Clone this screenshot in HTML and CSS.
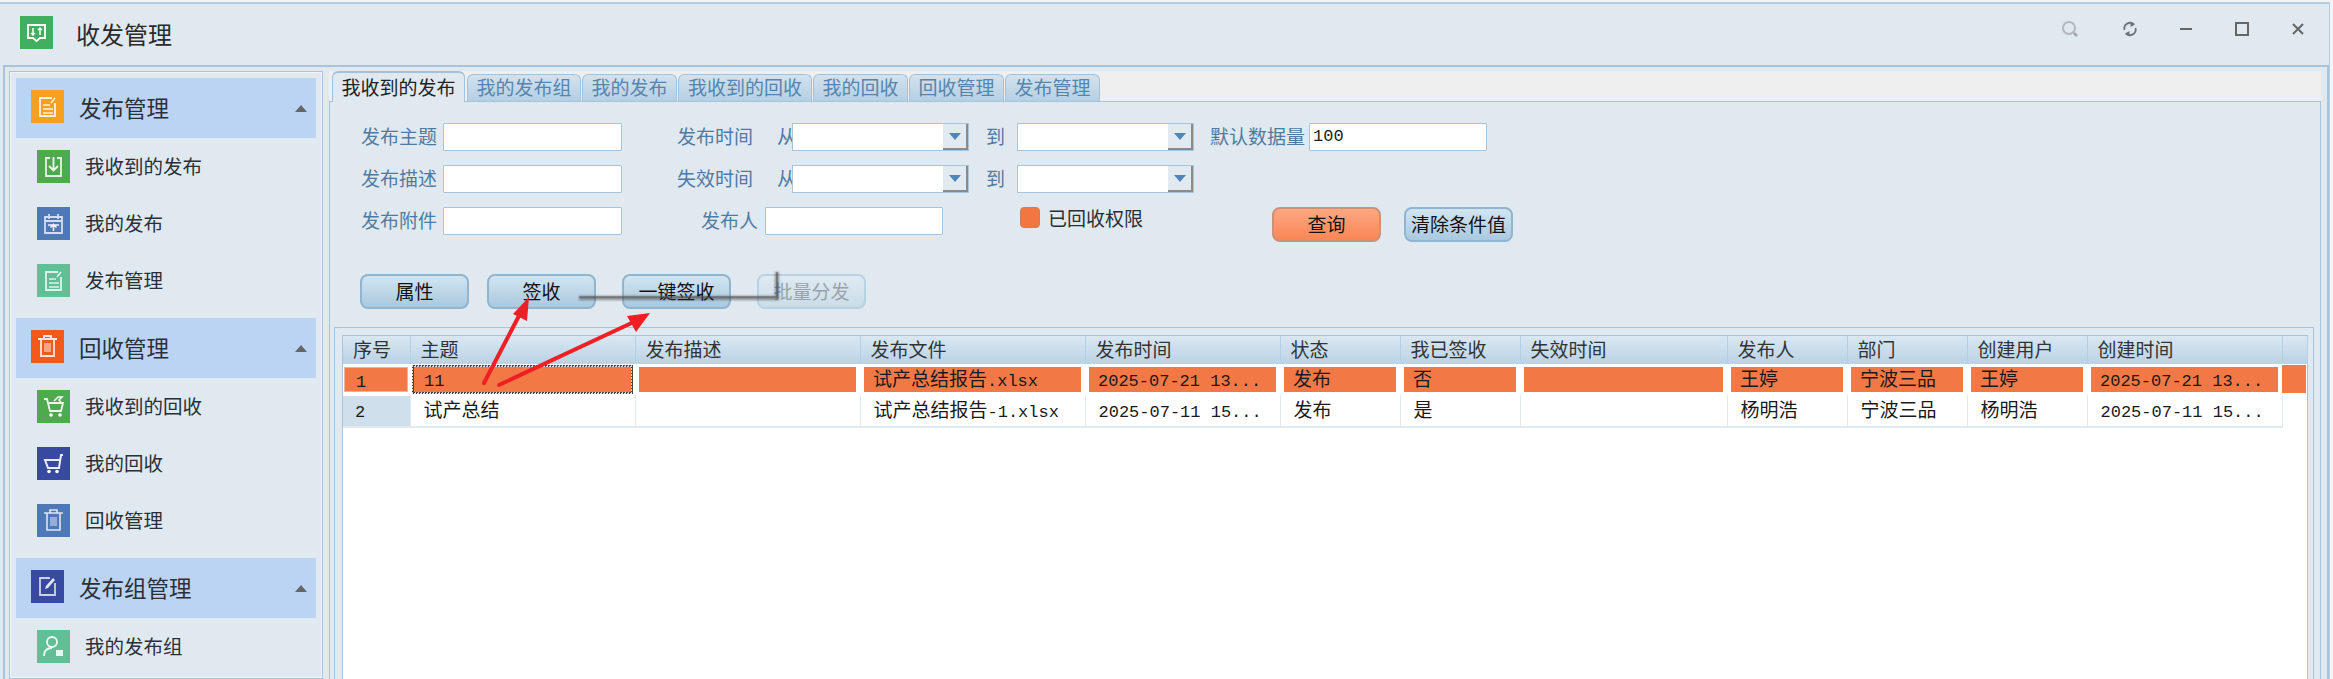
FILE: index.html
```html
<!DOCTYPE html>
<html lang="zh-CN">
<head>
<meta charset="utf-8">
<title>收发管理</title>
<link rel="stylesheet" href="styles.css">
</head>
<body>
<div class="window">
  <header class="titlebar">
    <span class="ico logo ico-green2"><svg viewBox="0 0 33 33"><path d="M8 9h17v13h-5l-3.500 3-3.500-3H8z" fill="none" stroke="#fff" stroke-width="1.800"/><path d="M13 12v7M11 17l2 2 2-2M20 19v-7M18 14l2-2 2 2" fill="none" stroke="#fff" stroke-width="1.500"/></svg></span>
    <span class="app-title">收发管理</span>
    <div class="controls">
      <span class="ctl ctl-search"><svg viewBox="0 0 20 20"><circle cx="9" cy="9" r="6" fill="none" stroke="#b4b8bc" stroke-width="2"/><path d="M14 14l3 3" stroke="#a0a4a8" stroke-width="2.500"/></svg></span>
      <span class="ctl"><svg viewBox="0 0 20 20"><path d="M4.500 11A5.700 5.700 0 0 1 14 5.500M15.500 9A5.700 5.700 0 0 1 6 14.500" fill="none" stroke="#707478" stroke-width="1.800"/><path d="M10.500 2.500l4.500 3-4.500 2.500zM9.500 17.500L5 14.500 9.500 12z" fill="#707478"/></svg></span>
      <span class="ctl"><svg viewBox="0 0 20 20"><path d="M4 10h12" stroke="#666" stroke-width="2"/></svg></span>
      <span class="ctl"><svg viewBox="0 0 20 20"><rect x="4" y="4" width="12" height="12" fill="none" stroke="#666" stroke-width="2"/></svg></span>
      <span class="ctl ctl-close"><svg viewBox="0 0 20 20"><path d="M5 5l10 10M15 5L5 15" stroke="#666" stroke-width="2"/></svg></span>
    </div>
  </header>
  <div class="main">
    <aside class="sidebar">
      <div class="side-panel">
        <section class="group">
          <div class="group-head">
            <span class="ico ico-orange"><svg viewBox="0 0 33 33"><path d="M21 8H9v18h15V13" fill="none" stroke="#fff" stroke-opacity=".85" stroke-width="1.800"/><path d="M12 15h7M12 19h10M12 23h10M20 13l4-5" fill="none" stroke="#fff" stroke-opacity=".85" stroke-width="1.600"/></svg></span>
            <span class="group-name">发布管理</span><i class="caret"></i>
          </div>
          <div class="item"><span class="ico ico-green"><svg viewBox="0 0 33 33"><path d="M13 8H9v18h15V8h-4" fill="none" stroke="#fff" stroke-opacity=".85" stroke-width="1.800"/><path d="M16.500 7v13M12 16l4.500 4.500L21 16" fill="none" stroke="#fff" stroke-opacity=".9" stroke-width="1.800"/></svg></span><span class="item-name">我收到的发布</span></div>
          <div class="item"><span class="ico ico-blue"><svg viewBox="0 0 33 33"><path d="M8 10h17v16H8zM8 14h17M12 7v5M21 7v5" fill="none" stroke="#fff" stroke-opacity=".75" stroke-width="1.800"/><path d="M11 18h11M16.500 24v-6M13.500 20.500l3-3 3 3" fill="none" stroke="#fff" stroke-opacity=".9" stroke-width="1.600"/></svg></span><span class="item-name">我的发布</span></div>
          <div class="item"><span class="ico ico-mint"><svg viewBox="0 0 33 33"><path d="M21 8H9v18h15V13" fill="none" stroke="#fff" stroke-opacity=".8" stroke-width="1.800"/><path d="M12 15h7M12 19h10M12 23h10M20 13l4-5" fill="none" stroke="#fff" stroke-opacity=".8" stroke-width="1.600"/></svg></span><span class="item-name">发布管理</span></div>
        </section>
        <section class="group">
          <div class="group-head">
            <span class="ico ico-red"><svg viewBox="0 0 33 33"><path d="M7 9h19M13 9V6h7v3M10 9v17h13V9" fill="none" stroke="#fff" stroke-opacity=".85" stroke-width="1.800"/><path d="M13 13h7v9h-7z" fill="#fff" fill-opacity=".45"/></svg></span>
            <span class="group-name">回收管理</span><i class="caret"></i>
          </div>
          <div class="item"><span class="ico ico-green"><svg viewBox="0 0 33 33"><path d="M7 9h3l3 12h11l2-8H12" fill="none" stroke="#fff" stroke-opacity=".9" stroke-width="1.800"/><circle cx="14" cy="25" r="1.800" fill="#fff"/><circle cx="23" cy="25" r="1.800" fill="#fff"/><path d="M17 11l4-4h4l-3 3 2 2" fill="none" stroke="#fff" stroke-width="1.500"/></svg></span><span class="item-name">我收到的回收</span></div>
          <div class="item"><span class="ico ico-navy"><svg viewBox="0 0 33 33"><path d="M26 8h-2l-2 13H11L8 13h15" fill="none" stroke="#fff" stroke-opacity=".9" stroke-width="2"/><circle cx="12" cy="24.500" r="1.800" fill="#fff"/><circle cx="20" cy="24.500" r="1.800" fill="#fff"/></svg></span><span class="item-name">我的回收</span></div>
          <div class="item"><span class="ico ico-blue"><svg viewBox="0 0 33 33"><path d="M7 9h19M13 9V6h7v3M10 9v17h13V9" fill="none" stroke="#fff" stroke-opacity=".8" stroke-width="1.600"/><path d="M13 13h7v9h-7z" fill="#fff" fill-opacity=".4"/></svg></span><span class="item-name">回收管理</span></div>
        </section>
        <section class="group">
          <div class="group-head">
            <span class="ico ico-navy"><svg viewBox="0 0 33 33"><path d="M19 8H9v17h15V13M9 25h15" fill="none" stroke="#fff" stroke-opacity=".75" stroke-width="1.800"/><path d="M14 19l1-3 7-8 2 2-7 8z" fill="#fff" fill-opacity=".85"/></svg></span>
            <span class="group-name">发布组管理</span><i class="caret"></i>
          </div>
          <div class="item"><span class="ico ico-mint"><svg viewBox="0 0 33 33"><circle cx="15" cy="12" r="5" fill="none" stroke="#fff" stroke-opacity=".9" stroke-width="1.800"/><path d="M7 26c0-5 3-8 8-8" fill="none" stroke="#fff" stroke-opacity=".9" stroke-width="1.800"/><rect x="19" y="20" width="7" height="6" fill="#fff" fill-opacity=".85"/></svg></span><span class="item-name">我的发布组</span></div>
        </section>
      </div>
    </aside>
    <main class="content">
      <nav class="tabs">
        <span class="tab tab-active">我收到的发布</span>
        <span class="tab tab-5">我的发布组</span>
        <span class="tab tab-4">我的发布</span>
        <span class="tab tab-6">我收到的回收</span>
        <span class="tab tab-4b">我的回收</span>
        <span class="tab tab-4b">回收管理</span>
        <span class="tab tab-4b">发布管理</span>
      </nav>
      <div class="page">
        <form class="filters">
          <div class="row">
            <label class="lbl lbl-a">发布主题</label><span class="field field-a"></span>
            <label class="lbl lbl-b">发布时间</label><label class="lbl lbl-from">从</label>
            <span class="combo"><i class="combo-btn"></i></span>
            <label class="lbl lbl-to">到</label>
            <span class="combo"><i class="combo-btn"></i></span>
            <label class="lbl lbl-count">默认数据量</label><span class="field mono">100</span>
          </div>
          <div class="row">
            <label class="lbl lbl-a">发布描述</label><span class="field field-a"></span>
            <label class="lbl lbl-b">失效时间</label><label class="lbl lbl-from">从</label>
            <span class="combo"><i class="combo-btn"></i></span>
            <label class="lbl lbl-to">到</label>
            <span class="combo"><i class="combo-btn"></i></span>
          </div>
          <div class="row">
            <label class="lbl lbl-a">发布附件</label><span class="field field-a"></span>
            <label class="lbl lbl-person">发布人</label><span class="field"></span>
            <i class="check"></i><span class="check-label">已回收权限</span>
            <span class="btn btn-orange btn-query">查询</span>
            <span class="btn btn-clear">清除条件值</span>
          </div>
        </form>
        <div class="actions">
          <span class="btn">属性</span>
          <span class="btn">签收</span>
          <span class="btn">一键签收</span>
          <span class="btn btn-disabled">批量分发</span>
        </div>
        <div class="grid-box">
          <div class="grid-inner">
            <table class="grid">
              <colgroup>
                <col class="w67"><col class="w225"><col class="w225"><col class="w225"><col class="w195"><col class="w120"><col class="w120"><col class="w207"><col class="w120"><col class="w120"><col class="w120"><col class="w195"><col class="w25">
              </colgroup>
              <thead>
                <tr><th>序号</th><th>主题</th><th>发布描述</th><th>发布文件</th><th>发布时间</th><th>状态</th><th>我已签收</th><th>失效时间</th><th>发布人</th><th>部门</th><th>创建用户</th><th>创建时间</th><th></th></tr>
              </thead>
              <tbody>
                <tr class="sel">
                  <td class="num"><div class="cell"><span class="lat">1</span></div></td>
                  <td><div class="focus"><div class="cell"><span class="lat">11</span></div></div></td>
                  <td><div class="cell"></div></td>
                  <td><div class="cell">试产总结报告<span class="lat">.xlsx</span></div></td>
                  <td><div class="cell"><span class="lat">2025-07-21 13...</span></div></td>
                  <td><div class="cell">发布</div></td>
                  <td><div class="cell">否</div></td>
                  <td><div class="cell"></div></td>
                  <td><div class="cell">王婷</div></td>
                  <td><div class="cell">宁波三品</div></td>
                  <td><div class="cell">王婷</div></td>
                  <td><div class="cell"><span class="lat">2025-07-21 13...</span></div></td>
                  <td class="tail"><div class="tail-fill"></div></td>
                </tr>
                <tr>
                  <td class="num"><div class="cell"><span class="lat">2</span></div></td>
                  <td><div class="cell">试产总结</div></td>
                  <td><div class="cell"></div></td>
                  <td><div class="cell">试产总结报告<span class="lat">-1.xlsx</span></div></td>
                  <td><div class="cell"><span class="lat">2025-07-11 15...</span></div></td>
                  <td><div class="cell">发布</div></td>
                  <td><div class="cell">是</div></td>
                  <td><div class="cell"></div></td>
                  <td><div class="cell">杨明浩</div></td>
                  <td><div class="cell">宁波三品</div></td>
                  <td><div class="cell">杨明浩</div></td>
                  <td><div class="cell"><span class="lat">2025-07-11 15...</span></div></td>
                  <td class="tail"></td>
                </tr>
              </tbody>
            </table>
          </div>
        </div>
      </div>
    </main>
  </div>
</div>
<svg class="annotations" viewBox="0 0 2333 679" width="2333" height="679">
  <defs><filter id="soft" x="-10%" y="-50%" width="120%" height="300%"><feGaussianBlur stdDeviation="1.200"/></filter></defs>
  <path d="M579 298H777V272" fill="none" stroke="#333" stroke-opacity=".5" stroke-width="4" filter="url(#soft)"/>
  <path d="M579 297H777V272" fill="none" stroke="#555" stroke-opacity=".6" stroke-width="1.500"/>
  <path d="M484 383L522 310M499 385L638 320" fill="none" stroke="#ee2024" stroke-width="4" stroke-linecap="round"/>
  <path d="M529 297L527 321 513 314zM650 313L636 332 627 316z" fill="#ee2024"/>
</svg>
</body>
</html>
```
FILE: styles.css
```css
* { box-sizing: border-box; }
html, body { margin: 0; height: 679px; overflow: hidden; }
body {
  position: relative;
  background: #f2f5f8;
  font-family: "Noto Sans CJK SC", "Noto Sans", sans-serif;
  color: #222;
}
.window {
  width: 2330px;
  height: 677px;
  margin-top: 2px;
  display: flex;
  flex-direction: column;
  background: #e0e8f0;
  border-top: 2px solid #b3cce0;
  border-right: 1px solid #b3cce0;
}
.titlebar {
  height: 61px;
  flex: none;
  display: flex;
  align-items: center;
  padding: 0 4px 0 20px;
}
.logo { margin-top: -4px; }
.app-title { margin: -2px 0 0 23px; font-size: 24px; line-height: 30px; color: #2a2a2a; }
.controls { margin: -12px 0 0 auto; display: flex; }
.ctl { width: 56px; height: 20px; display: flex; justify-content: center; }
.ctl svg { width: 20px; height: 20px; }
.ctl-search { margin-right: 4px; }
.ctl-close { width: 55px; }

.ico { width: 33px; height: 33px; flex: none; display: block; }
.ico svg { display: block; width: 33px; height: 33px; }
.ico-green2 { background: #41ae60; }
.ico-orange { background: #f5a01f; }
.ico-green { background: #4dab4e; }
.ico-blue { background: #4f78b6; }
.ico-mint { background: #5fc096; }
.ico-red { background: #f3591b; }
.ico-navy { background: #3849a2; }

.main {
  flex: 1;
  min-height: 0;
  margin-left: 3px;
  display: flex;
  border-top: 2px solid #a8c4dc;
  border-right: 2px solid #a8c4dc;
  overflow: hidden;
}
.sidebar {
  width: 320px;
  flex: none;
  border-left: 2px solid #a8c4dc;
  padding: 4px 0 0 4px;
}
.side-panel {
  width: 314px;
  height: 100%;
  padding: 6px;
  border: 1px solid #a8c4dc;
  box-shadow: inset 0 0 0 1px #eff4f8;
}
.group { margin-bottom: 9px; }
.group-head {
  height: 60px;
  padding: 0 9px 3px 15px;
  display: flex;
  align-items: center;
  background: #bcd4f4;
}
.group-name { margin: 1px 0 0 15px; font-size: 22.500px; line-height: 30px; color: #2a2f38; }
.caret {
  margin: 3px 0 0 auto;
  width: 0;
  height: 0;
  border-left: 6px solid transparent;
  border-right: 6px solid transparent;
  border-bottom: 7px solid #666;
}
.item {
  height: 57px;
  padding-left: 21px;
  display: flex;
  align-items: center;
}
.item-name { margin: -2px 0 0 15px; font-size: 19.500px; line-height: 26px; color: #2a2f38; }

.content { flex: 1; min-width: 0; margin-left: 5px; padding-top: 4px; display: flex; flex-direction: column; }
.tabs {
  height: 31px;
  flex: none;
  margin-left: 1px;
  margin-right: 6px;
  padding-left: 3px;
  display: flex;
  align-items: flex-end;
  background: #efefef;
  border-bottom: 1px solid #a8c4dc;
}
.tab {
  height: 27px;
  margin-right: 1px;
  padding-bottom: 2px;
  display: flex;
  align-items: center;
  justify-content: center;
  font-size: 19px;
  line-height: 24px;
  color: #5585ae;
  background: linear-gradient(#d2e2ef, #b5cfe2);
  border: 1px solid #a3c2da;
  border-bottom: 0;
  border-radius: 6px 6px 0 0;
}
.tab-active {
  width: 133px;
  height: 31px;
  margin-right: 2px;
  margin-bottom: -1px;
  color: #222;
  background: #e0e8f0;
  border-width: 2px 1px 0 1px;
}
.tab-5 { width: 114px; }
.tab-4 { width: 95px; }
.tab-6 { width: 134px; }
.tab-4b { width: 95px; }

.page {
  flex: 1;
  min-height: 0;
  margin: 0 6px 0 1px;
  border-left: 1px solid #a8c4dc;
  border-right: 1px solid #a8c4dc;
}
.filters { padding: 21px 0 0 31px; display: flex; flex-direction: column; gap: 14px; }
.row { height: 28px; display: flex; align-items: center; }
.lbl { font-size: 19px; line-height: 28px; color: #4f7ba3; white-space: nowrap; flex: none; padding-bottom: 2px; }
.lbl-a { width: 82px; }
.lbl-b { width: 100px; margin-left: 55px; }
.lbl-from { width: 15px; }
.lbl-to { width: 31px; margin-left: 17px; }
.lbl-count { width: 99px; margin-left: 16px; }
.lbl-person { width: 64px; margin-left: 79px; }
.field {
  width: 178px;
  height: 28px;
  flex: none;
  padding-left: 3px;
  background: #fff;
  border: 1px solid #a8c4dc;
  border-radius: 1px;
}
.field-a { width: 179px; }
.mono { font: 17px/26px "Liberation Mono", monospace; color: #222; }
.combo {
  width: 177px;
  height: 28px;
  flex: none;
  display: flex;
  justify-content: flex-end;
  background: #fff;
  border: 1px solid #a8c4dc;
}
.combo-btn {
  width: 25px;
  height: 26px;
  position: relative;
  background: #e2eaf1;
  border-right: 2px solid #8a8a8a;
  border-bottom: 2px solid #8a8a8a;
}
.combo-btn::after {
  content: "";
  position: absolute;
  left: 6px;
  top: 9px;
  border-left: 6px solid transparent;
  border-right: 6px solid transparent;
  border-top: 7px solid #4f85b8;
}
.check {
  width: 20px;
  height: 21px;
  margin: -7px 0 0 77px;
  flex: none;
  background: #f1763f;
  border: 1px solid #c9805f;
  border-radius: 4px;
}
.check-label { width: 95px; margin: -7px 0 0 8px; flex: none; font-size: 19px; line-height: 28px; color: #2a2f38; }
.btn {
  width: 109px;
  height: 35px;
  flex: none;
  padding-bottom: 2px;
  display: flex;
  align-items: center;
  justify-content: center;
  font-size: 19px;
  line-height: 24px;
  color: #111;
  background: linear-gradient(#d3e4f1, #a9c9df);
  border: 2px solid #8fb5d1;
  border-radius: 8px;
}
.btn-query { margin: 7px 0 0 129px; }
.btn-clear { margin: 7px 0 0 23px; }
.btn-orange { background: linear-gradient(#ffa781, #f98655); border-color: #cf9078; }
.btn-disabled { color: #9aa2a8; background: linear-gradient(#e0eaf2, #c9dde9); border-color: #b8d2e3; }
.actions { margin: 39px 0 0 30px; display: flex; }
.actions .btn { margin-right: 18px; }
.actions .btn:nth-child(2) { margin-right: 26px; }
.actions .btn:nth-child(3) { margin-right: 26px; }

.grid-box {
  margin: 18px 6px 0 4px;
  height: 360px;
  padding: 7px 5px 0 7px;
  border: 1px solid #a8c4dc;
}
.grid-inner { height: 100%; background: #fff; border: 1px solid #a8c4dc; border-bottom: 0; }
.grid { width: 1964px; border-collapse: collapse; table-layout: fixed; }
.w67 { width: 67px; }
.w225 { width: 225px; }
.w195 { width: 195px; }
.w120 { width: 120px; }
.w207 { width: 207px; }
.w25 { width: 25px; }
.grid th {
  height: 28px;
  padding: 0 0 3px 10px;
  text-align: left;
  font-size: 19px;
  line-height: 24px;
  font-weight: 400;
  color: #333;
  background: linear-gradient(#d9e7f3, #b9d2e5);
  border-right: 1px solid #b4cfe2;
  white-space: nowrap;
}
.grid td {
  height: 32px;
  padding: 0;
  border-right: 1px solid #e0eaf2;
  border-bottom: 2px solid #e0eaf2;
}
.grid td.tail { border: 0; }
.cell {
  height: 30px;
  padding-left: 13px;
  font-size: 19px;
  line-height: 26px;
  color: #1a1a1a;
  white-space: nowrap;
}
.lat { font-family: "Liberation Mono", monospace; font-size: 17px; }
.num .cell { padding-left: 12px; background: #cfe0ec; }
.sel td { height: 31px; border: 0; }
.sel .cell {
  height: 25px;
  margin: 3px 4px;
  padding-left: 9px;
  line-height: 21px;
  background: #f27845;
}
.sel .num .cell { margin: 3px 2px 3px 1px; padding-left: 11px; border: 1px solid #f7b08f; }
.focus {
  height: 29px;
  margin: 1px 2px;
  padding: 2px;
  background: repeating-conic-gradient(#444 0 25%, #ddd 0 50%) 0 0 / 3px 3px;
}
.sel .focus .cell { margin: 0; height: 25px; padding-left: 10px; }
.tail-fill { height: 28px; margin: 1px 1px 2px 0; background: #f27845; }

.annotations { position: absolute; left: 0; top: 0; pointer-events: none; }
```
